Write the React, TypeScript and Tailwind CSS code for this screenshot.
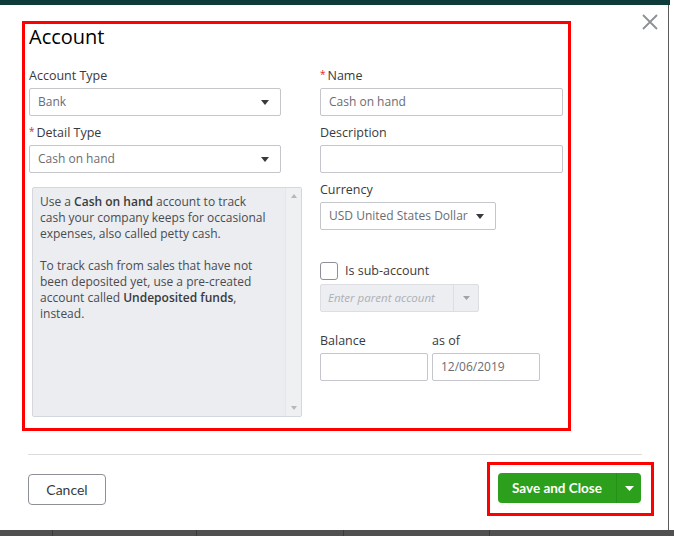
const body = { fontFamily: '"Open Sans", "Noto Sans", sans-serif' };
const btn = { fontFamily: 'Lato, "Liberation Sans", sans-serif' };

function Caret({ light }: { light?: boolean }) {
  return (
    <svg width="8" height="5" viewBox="0 0 8 5" className="shrink-0">
      <path d="M0 0h8L4 5z" fill={light ? "#9a9ca1" : "#393a3d"} />
    </svg>
  );
}

function Label({ text, required }: { text: string; required?: boolean }) {
  return (
    <div className="flex h-[20px] items-center text-[12.5px] font-medium leading-[20px] text-[#393a3d]">
      {required && <span className="mr-[2px] -mt-[5px] text-[10px] text-[#d52b1e]">*</span>}
      {text}
    </div>
  );
}

function Select({ value, width }: { value: string; width: string }) {
  return (
    <div
      className={`mt-[2px] flex h-[28px] ${width} items-center justify-between rounded-[2px] border border-[#c4c6cc] pl-[8px] pr-[11px] text-[12px] text-[#6b6c72]`}
    >
      <span>{value}</span>
      <Caret />
    </div>
  );
}

function Input({ value, width }: { value?: string; width: string }) {
  return (
    <div
      className={`mt-[2px] flex h-[28px] ${width} items-center rounded-[2px] border border-[#c4c6cc] px-[8px] text-[12px] text-[#6b6c72]`}
    >
      {value}
    </div>
  );
}

export default function App() {
  return (
    <div className="flex h-[536px] w-[674px] flex-col overflow-hidden bg-white" style={body}>
      <div className="h-[5px] w-[670px] shrink-0 bg-[#0c3b39]" />

      <div className="flex h-[525px] shrink-0">
        <div className="flex w-[669px] flex-col border-r border-[#5a5a5a] bg-white">
          {/* form area */}
          <div className="flex justify-between">
            <div className="ml-[22px] mt-[16px] h-[410px] w-[549px] border-[3px] border-[#ff0000] px-[4px]">
              <h1 className="text-[20px] font-medium leading-[26px] text-[#000]">Account</h1>

              <div className="mt-[16px] flex">
                {/* left column */}
                <div className="w-[291px]">
                  <Label text="Account Type" />
                  <Select value="Bank" width="w-[252px]" />
                  <div className="mt-[7px]">
                    <Label text="Detail Type" required />
                  </div>
                  <Select value="Cash on hand" width="w-[252px]" />

                  <div className="ml-[3px] mt-[14px] flex h-[230px] w-[270px] rounded-[2px] border border-[#d4d7dc] bg-[#ebedf0]">
                    <div className="flex-1 whitespace-nowrap px-[7px] pt-[6px] text-[12px] leading-[16px] text-[#4a4b4f]">
                      <p>
                        Use a <b className="font-semibold text-[#393a3d]">Cash on hand</b> account to track
                        <br />
                        cash your company keeps for occasional
                        <br />
                        expenses, also called petty cash.
                      </p>
                      <p className="mt-[16px]">
                        To track cash from sales that have not
                        <br />
                        been deposited yet, use a pre-created
                        <br />
                        account called <b className="font-semibold text-[#393a3d]">Undeposited funds</b>,
                        <br />
                        instead.
                      </p>
                    </div>
                    <div className="flex w-[16px] flex-col items-center justify-between border-l border-[#e4e6e9] bg-[#eef0f2] py-[6px]">
                      <svg width="6" height="4" viewBox="0 0 6 4">
                        <path d="M0 4h6L3 0z" fill="#b5b7bb" />
                      </svg>
                      <svg width="6" height="4" viewBox="0 0 6 4">
                        <path d="M0 0h6L3 4z" fill="#b5b7bb" />
                      </svg>
                    </div>
                  </div>
                </div>

                {/* right column */}
                <div className="w-[243px]">
                  <Label text="Name" required />
                  <Input value="Cash on hand" width="w-[243px]" />
                  <div className="mt-[7px]">
                    <Label text="Description" />
                  </div>
                  <Input width="w-[243px]" />
                  <div className="mt-[7px]">
                    <Label text="Currency" />
                  </div>
                  <Select value="USD United States Dollar" width="w-[176px]" />

                  <div className="mt-[32px] flex h-[18px] items-center">
                    <div className="h-[18px] w-[18px] rounded-[3px] border border-[#8d9096] bg-white" />
                    <span className="ml-[7px] text-[12.5px] text-[#393a3d]">Is sub-account</span>
                  </div>

                  <div className="mt-[4px] flex h-[28px] w-[159px] rounded-[2px] border border-[#dcdee2] bg-[#eceef1]">
                    <div className="flex flex-1 items-center pl-[7px] text-[11.5px] italic text-[#aeb0b5]">
                      Enter parent account
                    </div>
                    <div className="flex w-[25px] items-center justify-center border-l border-[#dcdee2]">
                      <svg width="7" height="4" viewBox="0 0 7 4">
                        <path d="M0 0h7L3.5 4z" fill="#a0a2a7" />
                      </svg>
                    </div>
                  </div>

                  <div className="mt-[19px] flex">
                    <div className="w-[112px]">
                      <Label text="Balance" />
                      <Input width="w-[108px]" />
                    </div>
                    <div className="w-[108px]">
                      <Label text="as of" />
                      <Input value="12/06/2019" width="w-[108px]" />
                    </div>
                  </div>
                </div>
              </div>
            </div>

            <button className="mr-[10px] mt-[9px] h-[16px] w-[16px] self-start">
              <svg width="16" height="16" viewBox="0 0 16 16">
                <path d="M1 1l14 14M15 1L1 15" stroke="#8d9096" strokeWidth="1.8" />
              </svg>
            </button>
          </div>

          {/* footer */}
          <div className="ml-[28px] mt-[23px] h-px w-[614px] bg-[#dcdcdc]" />
          <div className="mt-[7px] flex items-center justify-between pl-[28px] pr-[14px]">
            <button
              className="h-[31px] w-[78px] rounded-[4px] border border-[#8d9096] bg-white text-[14px] text-[#393a3d]"
              style={btn}
            >
              Cancel
            </button>
            <div className="border-[3px] border-[#ff0000] pb-[10px] pl-[8px] pr-[10px] pt-[8px]">
              <div className="flex h-[30px] w-[143px] rounded-[4px] bg-[#2ca01c]" style={btn}>
                <span className="flex flex-1 items-center pl-[14px] text-[13.5px] font-bold text-white">
                  Save and Close
                </span>
                <span className="flex w-[25px] items-center justify-center border-l border-[#25901a]">
                  <svg width="9" height="5" viewBox="0 0 9 5">
                    <path d="M0 0h9L4.5 5z" fill="#fff" />
                  </svg>
                </span>
              </div>
            </div>
          </div>
        </div>
        <div className="flex-1 bg-white" />
      </div>

      <div className="flex h-[6px] shrink-0 bg-[#505050]">
        <div className="w-[53px] border-r border-[#3a3a3a]" />
        <div className="w-[144px] border-r border-[#3a3a3a]" />
        <div className="w-[147px] border-r border-[#3a3a3a]" />
        <div className="w-[146px] border-r border-[#3a3a3a]" />
        <div className="flex-1" />
      </div>
    </div>
  );
}
